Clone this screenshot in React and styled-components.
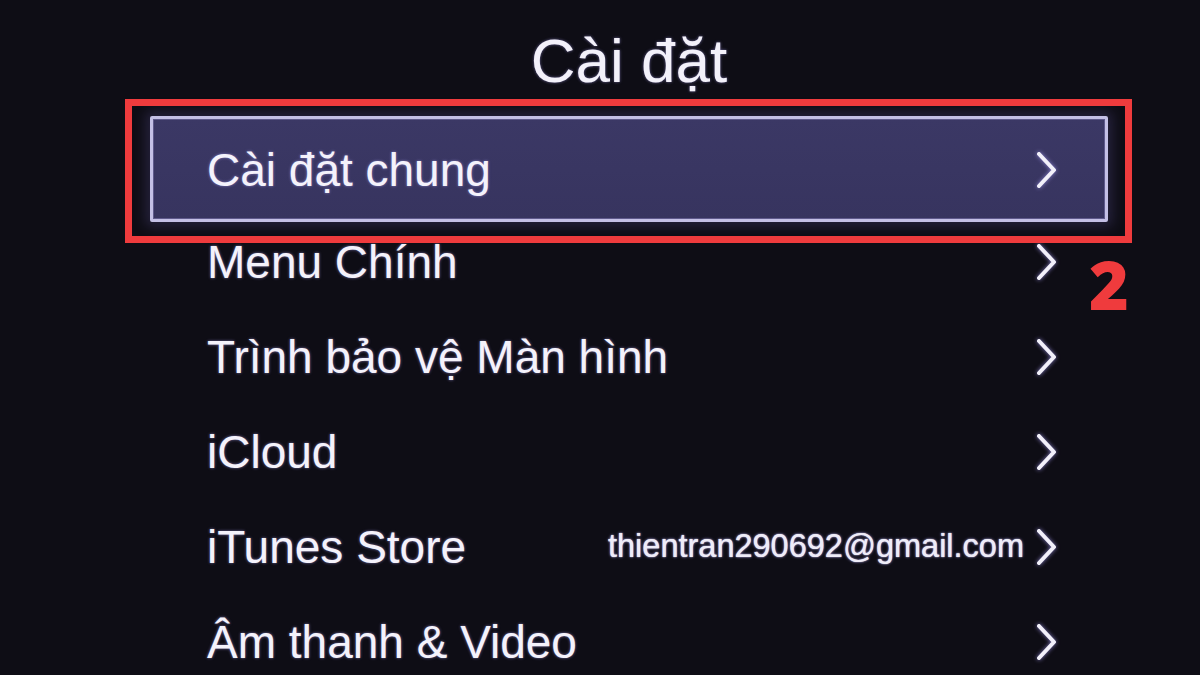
import styled, { createGlobalStyle } from 'styled-components'

const GlobalStyle = createGlobalStyle`
  html, body {
    margin: 0;
    padding: 0;
    background: #0e0d15;
  }
`

const Page = styled.div`
  position: relative;
  width: 1200px;
  height: 675px;
  overflow: hidden;
  background: #0e0d15;
  font-family: "Liberation Sans", Arial, sans-serif;
`

const Column = styled.div`
  width: 958px;
  margin-left: 150px;
  display: flex;
  flex-direction: column;
`

const Title = styled.h1`
  margin: 0;
  padding-top: 30px;
  height: 62px;
  line-height: 62px;
  font-size: 62px;
  font-weight: 400;
  text-align: center;
  color: #f3f1fa;
  text-shadow: 0 0 3px rgba(170, 160, 240, 0.6);
`

const List = styled.div`
  margin-top: 33px;
  display: flex;
  flex-direction: column;
`

const Row = styled.div`
  position: relative;
  height: ${p => (p.$active ? '89px' : '95px')};
  display: flex;
  align-items: center;
  justify-content: space-between;
  padding: 0 50px 0 57px;

  &::before {
    content: '';
    display: ${p => (p.$active ? 'block' : 'none')};
    position: absolute;
    top: -9px;
    bottom: -8px;
    left: 0;
    right: 0;
    border: 3px solid #c4c0e6;
    border-radius: 2px;
    background: linear-gradient(#3b3865, #37345f);
    box-shadow: inset 0 0 0 1px #5f5a8c, 0 0 12px 5px rgba(55, 50, 90, 0.55);
  }
`

const Label = styled.span`
  position: relative;
  font-size: 46px;
  color: #f4f2fb;
  text-shadow: 0 0 3px rgba(170, 160, 240, 0.65);
  white-space: nowrap;
`

const Right = styled.div`
  position: relative;
  display: flex;
  align-items: center;
  gap: 11px;
`

const Value = styled.span`
  font-size: 32.5px;
  font-weight: 400;
  color: #eeecf8;
  text-shadow: 0 0 1px #eeecf8, 0 0 3px rgba(170, 160, 240, 0.8);
  white-space: nowrap;
`

const ChevronSvg = styled.svg`
  display: block;
  width: 23px;
  height: 40px;
  filter: drop-shadow(0 0 2px rgba(160, 150, 235, 0.8));
`

const Chevron = () => (
  <ChevronSvg viewBox="0 0 23 40">
    <polyline
      points="4,4 19,20 4,36"
      fill="none"
      stroke="#f2f0fa"
      strokeWidth="4"
      strokeLinecap="round"
      strokeLinejoin="round"
    />
  </ChevronSvg>
)

const Marker = styled.div`
  position: absolute;
  left: 125px;
  top: 99px;
  width: 1007px;
  height: 144px;
  box-sizing: border-box;
  border: 7px solid #ef3b3d;
  pointer-events: none;
`

const StepNumber = styled.div`
  position: absolute;
  left: 1089px;
  top: 250px;
  font-family: "Open Sans", "Liberation Sans", sans-serif;
  font-size: 68px;
  font-weight: 800;
  line-height: 1;
  color: #ef3b3d;
`

const items = [
  { label: 'Cài đặt chung', active: true },
  { label: 'Menu Chính' },
  { label: 'Trình bảo vệ Màn hình' },
  { label: 'iCloud' },
  { label: 'iTunes Store', value: 'thientran290692@gmail.com' },
  { label: 'Âm thanh & Video' },
]

export default function App() {
  return (
    <Page>
      <GlobalStyle />
      <Column>
        <Title>Cài đặt</Title>
        <List>
          {items.map(item => (
            <Row key={item.label} $active={item.active}>
              <Label>{item.label}</Label>
              <Right>
                {item.value && <Value>{item.value}</Value>}
                <Chevron />
              </Right>
            </Row>
          ))}
        </List>
      </Column>
      <Marker />
      <StepNumber>2</StepNumber>
    </Page>
  )
}
